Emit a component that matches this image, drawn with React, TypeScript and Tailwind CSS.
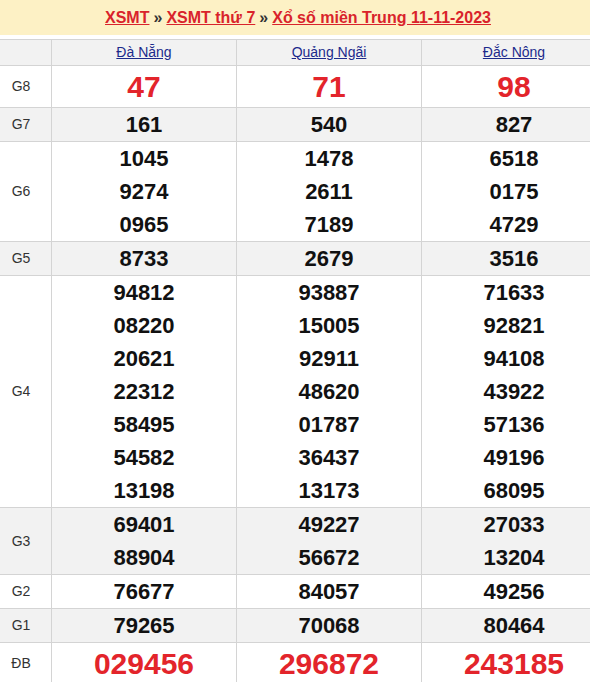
import type { ReactNode } from 'react';

const cols = ['Đà Nẵng', 'Quảng Ngãi', 'Đắc Nông'];

interface Prize {
  label: string;
  values: string[][];
  big?: boolean;
  gray?: boolean;
}

const prizes: Prize[] = [
  { label: 'G8', values: [['47'], ['71'], ['98']], big: true },
  { label: 'G7', values: [['161'], ['540'], ['827']], gray: true },
  {
    label: 'G6',
    values: [
      ['1045', '9274', '0965'],
      ['1478', '2611', '7189'],
      ['6518', '0175', '4729'],
    ],
  },
  { label: 'G5', values: [['8733'], ['2679'], ['3516']], gray: true },
  {
    label: 'G4',
    values: [
      ['94812', '08220', '20621', '22312', '58495', '54582', '13198'],
      ['93887', '15005', '92911', '48620', '01787', '36437', '13173'],
      ['71633', '92821', '94108', '43922', '57136', '49196', '68095'],
    ],
  },
  {
    label: 'G3',
    values: [
      ['69401', '88904'],
      ['49227', '56672'],
      ['27033', '13204'],
    ],
    gray: true,
  },
  { label: 'G2', values: [['76677'], ['84057'], ['49256']] },
  { label: 'G1', values: [['79265'], ['70068'], ['80464']], gray: true },
  { label: 'ĐB', values: [['029456'], ['296872'], ['243185']], big: true },
];

function Cell({ children, className = '' }: { children: ReactNode; className?: string }) {
  return <div className={`flex w-[185px] flex-col items-center justify-center border-l border-[#d4d4d4] ${className}`}>{children}</div>;
}

export default function App() {
  return (
    <div className="h-[682px] w-[590px] overflow-hidden bg-white font-['Liberation_Sans',Arial,sans-serif]">
      <div className="w-[606px]">
        {/* title */}
        <div className="flex h-[35px] items-center justify-center bg-[#fdf1c5] pr-[10px] text-[16px] font-bold">
          <a href="#" className="text-[#d9232b] underline">XSMT</a>
          <span className="mx-[4px] text-[#333]">»</span>
          <a href="#" className="text-[#d9232b] underline">XSMT thứ 7</a>
          <span className="mx-[4px] text-[#333]">»</span>
          <a href="#" className="text-[#d9232b] underline">Xổ số miền Trung 11-11-2023</a>
        </div>

        <div className="mt-[4px] border-t border-[#d4d4d4]">
          {/* province header */}
          <div className="flex h-[26px] border-b border-[#d4d4d4] bg-[#f2f2f2]">
            <div className="w-[51px]" />
            {cols.map((c) => (
              <Cell key={c}>
                <a href="#" className="text-[14px] text-[#1c2a8c] underline">{c}</a>
              </Cell>
            ))}
          </div>

          {prizes.map((p) => (
            <div key={p.label} className={`flex border-b border-[#d4d4d4] ${p.gray ? 'bg-[#f2f2f2]' : 'bg-white'}`}>
              <div className="flex w-[51px] items-center justify-center pr-[9px] text-[14px] text-[#333]">{p.label}</div>
              {p.values.map((vals, i) => (
                <Cell key={i}>
                  {vals.map((v, j) => (
                    <div
                      key={j}
                      className={
                        p.big
                          ? 'text-[30px] leading-[41px] font-bold text-[#e3242b]'
                          : 'text-[22px] leading-[33px] font-bold text-[#111]'
                      }
                    >
                      {v}
                    </div>
                  ))}
                </Cell>
              ))}
            </div>
          ))}
        </div>
      </div>
    </div>
  );
}
